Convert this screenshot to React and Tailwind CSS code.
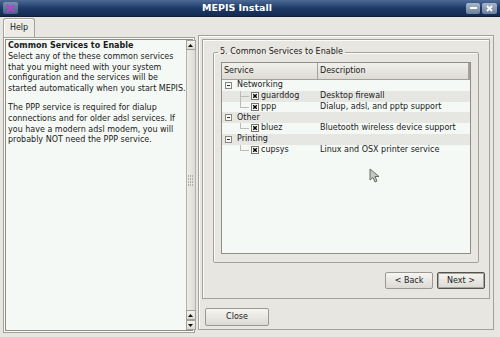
import React from 'react';

const rows = [
  { kind: 'group', label: 'Networking' },
  { kind: 'item', label: 'guarddog', desc: 'Desktop firewall', last: false },
  { kind: 'item', label: 'ppp', desc: 'Dialup, adsl, and pptp support', last: true },
  { kind: 'group', label: 'Other' },
  { kind: 'item', label: 'bluez', desc: 'Bluetooth wireless device support', last: true },
  { kind: 'group', label: 'Printing' },
  { kind: 'item', label: 'cupsys', desc: 'Linux and OSX printer service', last: true },
];

const CheckBox = () => (
  <svg width="8" height="8" viewBox="0 0 8 8" className="shrink-0">
    <rect x="0.5" y="0.5" width="7" height="7" fill="#ffffff" stroke="#77756f" />
    <path d="M2.2 2.2 L5.8 5.8 M5.8 2.2 L2.2 5.8" stroke="#000" strokeWidth="1.5" />
  </svg>
);

const Minus = () => (
  <svg width="7" height="7" viewBox="0 0 7 7" className="shrink-0">
    <rect x="0.5" y="0.5" width="6" height="6" fill="#f7f7f5" stroke="#8a8882" />
    <path d="M2 3.5 H5" stroke="#333" strokeWidth="1" />
  </svg>
);

const Button = ({ children, width, focus }) => (
  <div
    className={`flex items-center justify-center h-[17px] rounded-[2px] border bg-gradient-to-b from-[#f6f5f2] to-[#dcdad3] text-[#1c1c1c] ${
      focus ? 'border-[#55534f] shadow-[inset_0_0_0_1px_#a8a69f]' : 'border-[#9a9892]'
    } ${width}`}
  >
    {children}
  </div>
);

const ScrollArrow = ({ up }) => (
  <div className="h-[10px] w-[10px] flex items-center justify-center border border-[#a3a19a] bg-gradient-to-b from-[#f4f3ef] to-[#dcdad3]">
    <svg width="5" height="3" viewBox="0 0 5 3">
      <path d={up ? 'M0 3 L2.5 0 L5 3 Z' : 'M0 0 L2.5 3 L5 0 Z'} fill="#111" />
    </svg>
  </div>
);

export default function App() {
  return (
    <div
      className="relative w-[500px] h-[337px] overflow-hidden bg-[#e8e6e0] text-[8px] text-[#1a1a1a]"
      style={{ fontFamily: '"DejaVu Sans", Verdana, sans-serif' }}
    >
      {/* title bar */}
      <div className="relative h-[17px] flex items-center bg-gradient-to-b from-[#4d6b96] via-[#1f3b68] to-[#142a52] border-b border-[#0d1d3a]">
        <div className="ml-[3px] w-[15px] h-[12px] rounded-[2px] bg-gradient-to-b from-[#7c8fb0] to-[#4a5f85] flex items-center justify-center">
          <svg width="9" height="9" viewBox="0 0 9 9">
            <path d="M1 1 L8 8 M8 1 L1 8" stroke="#c23cd4" strokeWidth="1.8" />
          </svg>
        </div>
        <div className="flex-1 text-center font-bold text-white text-[9.5px] pr-[10px]">MEPIS Install</div>
        <div className="flex gap-[2px] mr-[3px]">
          <div className="w-[14px] h-[11px] rounded-[2px] bg-gradient-to-b from-[#a9b7cb] to-[#6c7f9d] flex items-center justify-center">
            <div className="w-[7px] h-[2px] bg-white" />
          </div>
          <div className="w-[15px] h-[11px] rounded-[2px] bg-gradient-to-b from-[#a9b7cb] to-[#6c7f9d] flex items-center justify-center">
            <svg width="7" height="7" viewBox="0 0 7 7">
              <path d="M1 1 L6 6 M6 1 L1 6" stroke="#fff" strokeWidth="1.8" />
            </svg>
          </div>
        </div>
      </div>

      <div className="flex">
        {/* left help panel */}
        <div className="ml-[3px] mt-[1px] w-[192px] flex flex-col">
          <div className="w-[32px] h-[19px] rounded-t-[3px] border border-b-0 border-[#a3a19a] bg-[#ecebe6] flex items-center justify-center shadow-[inset_1px_1px_0_#fff]">
            Help
          </div>
          <div className="h-[296px] border border-[#a3a19a] p-[1px] shadow-[inset_0_0_0_1px_#fbfbf9]">
            <div className="h-full flex border border-[#8f8d86]">
              <div className="flex-1 bg-[#f5f9f6] pl-[2px] pt-[1px] leading-[10.8px] whitespace-nowrap">
                <div className="font-bold">Common Services to Enable</div>
                <div>Select any of the these common services</div>
                <div>that you might need with your system</div>
                <div>configuration and the services will be</div>
                <div>started automatically when you start MEPIS.</div>
                <div className="mt-[8px]">The PPP service is required for dialup</div>
                <div>connections and for older adsl services. If</div>
                <div>you have a modern adsl modem, you will</div>
                <div>probably NOT need the PPP service.</div>
              </div>
              <div className="w-[10px] flex flex-col bg-[#e2e0da]">
                <ScrollArrow up />
                <div className="flex-1 border-x border-[#b3b1aa] bg-gradient-to-r from-[#eeede9] to-[#dedcd5] flex items-center justify-center">
                  <div className="grid grid-cols-3 gap-[1px]">
                    {Array.from({ length: 12 }).map((_, i) => (
                      <div key={i} className="w-[1px] h-[2px] bg-[#b0aea7]" />
                    ))}
                  </div>
                </div>
                <ScrollArrow up />
                <ScrollArrow />
              </div>
            </div>
          </div>
        </div>

        {/* right wizard panel */}
        <div className="ml-[3px] mt-[18px] w-[296px] h-[295px] border border-[#a3a19a] shadow-[inset_1px_1px_0_#fbfbf9] p-[3px] flex flex-col">
          <div className="h-[261px] border border-[#a3a19a] shadow-[inset_1px_1px_0_#fbfbf9] flex flex-col">
            <fieldset className="ml-[10px] mt-[6px] w-[266px] h-[217px] border border-[#a3a19a] rounded-[2px] shadow-[inset_1px_1px_0_#fbfbf9] px-[7px]">
              <legend className="-ml-[3px] px-[2px]">5. Common Services to Enable</legend>
              <div className="mt-[4px] h-[192px] border border-[#8f8d86] bg-[#f5f9f6] flex flex-col">
                <div className="h-[17px] flex border-b border-[#a3a19a] bg-gradient-to-b from-[#f1f0ec] to-[#dddbd4]">
                  <div className="w-[96px] pl-[2px] flex items-center border-r border-[#a3a19a]">Service</div>
                  <div className="flex-1 pl-[2px] flex items-center border-r-2 border-[#a3a19a]">Description</div>
                </div>
                {rows.map((r, i) => (
                  <div
                    key={i}
                    className={`h-[10.75px] flex items-center ${i % 2 === 1 ? 'bg-[#e6e6e3]' : ''}`}
                  >
                    <div className="w-[96px] h-full flex items-center">
                      {r.kind === 'group' ? (
                        <>
                          <div className="ml-[3px] mr-[5px]">
                            <Minus />
                          </div>
                          <span>{r.label}</span>
                        </>
                      ) : (
                        <>
                          <div className="relative ml-[18px] w-[10px] h-full">
                            <div
                              className={`absolute left-0 top-0 w-0 border-l border-[#bdbbb4] ${
                                r.last ? 'h-1/2' : 'h-full'
                              }`}
                            />
                            <div className="absolute left-0 top-1/2 w-[9px] border-t border-[#bdbbb4]" />
                          </div>
                          <div className="ml-[1px] mr-[2px]">
                            <CheckBox />
                          </div>
                          <span>{r.label}</span>
                        </>
                      )}
                    </div>
                    <div className="pl-[2px] whitespace-nowrap">{r.desc || ''}</div>
                  </div>
                ))}
              </div>
            </fieldset>
            <div className="flex justify-end gap-[4px] mt-[9px] mr-[4px]">
              <Button width="w-[48px]">&lt; Back</Button>
              <Button width="w-[48px]" focus>
                Next &gt;
              </Button>
            </div>
          </div>
          <div className="mt-[9px] ml-[3px]">
            <Button width="w-[64px] h-[18px]">Close</Button>
          </div>
        </div>
      </div>

      {/* mouse pointer */}
      <svg className="absolute left-[369px] top-[168px]" width="11" height="15" viewBox="0 0 11 15">
        <path d="M1 1 L1 12 L4 9.5 L6 14 L8 13 L6 8.5 L10 8.5 Z" fill="#c9c9c3" stroke="#5c5c58" strokeWidth="0.9" />
      </svg>
    </div>
  );
}
